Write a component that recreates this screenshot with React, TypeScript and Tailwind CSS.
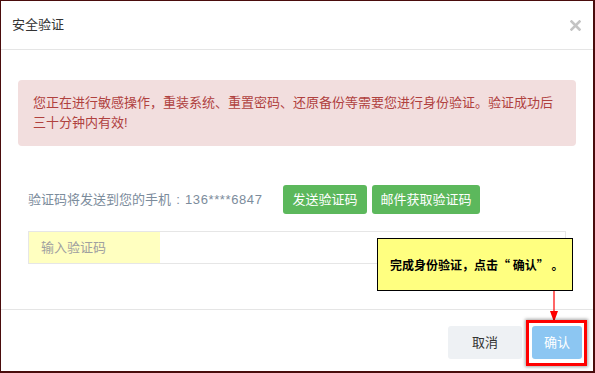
import React from "react";

const font = { fontFamily: '"Liberation Sans", "Noto Sans CJK SC", sans-serif' };
const cjk = { fontFamily: '"Noto Sans CJK SC", "Liberation Sans", sans-serif' };

function CloseIcon() {
  return (
    <svg width="11" height="11" viewBox="0 0 11 11" className="text-[#c4c4c4]">
      <path d="M1.5 1.5 L9.5 9.5 M9.5 1.5 L1.5 9.5" stroke="currentColor" strokeWidth="2.6" strokeLinecap="square" />
    </svg>
  );
}

export default function App() {
  return (
    <div
      style={font}
      className="relative flex h-[373px] w-[595px] flex-col overflow-hidden border border-r-2 border-b-2 border-[#4a0c0c] bg-white"
    >
      <div className="flex h-[49px] shrink-0 items-center justify-between border-b border-[#e5e5e5] pl-[11px] pr-[12px]">
        <span className="text-[13px] text-[#333]">安全验证</span>
        <CloseIcon />
      </div>

      <div className="flex-1 pl-[17px] pr-[17px] pt-[30px]">
        <div className="rounded-[4px] bg-[#f2dede] px-[15px] py-[13px] text-[13px] leading-[20px] text-[#b0413e]">
          您正在进行敏感操作，重装系统、重置密码、还原备份等需要您进行身份验证。验证成功后
          <br />
          三十分钟内有效!
        </div>

        <div className="ml-[10px] mt-[39px] flex items-center">
          <span className="flex w-[255px] items-center text-[13px] text-[#7c8c9c]">
            验证码将发送到您的手机
            <span className="inline-block w-[14px] text-center">:</span>
            <span className="tracking-[0.6px]">136****6847</span>
          </span>
          <button className="h-[29px] w-[84px] rounded-[3px] bg-[#5cb85c] text-[13px] text-white">
            发送验证码
          </button>
          <button className="ml-[5px] h-[29px] w-[108px] rounded-[3px] bg-[#5cb85c] text-[13px] text-white">
            邮件获取验证码
          </button>
        </div>

        <div className="ml-[10px] mt-[17px] flex h-[33px] w-[538px] border border-[#e6e6e6]">
          <div className="flex w-[131px] items-center bg-[#ffffc0] pl-[12px] text-[13px] text-[#a0a0a0]">
            输入验证码
          </div>
        </div>
      </div>

      <div className="flex h-[62px] shrink-0 items-start justify-end gap-[10px] border-t border-[#e5e5e5] pr-[11px] pt-[16px]">
        <button className="h-[33px] w-[74px] rounded-[3px] bg-[#eef1f4] text-[13px] text-[#333]">取消</button>
        <button className="h-[33px] w-[50px] rounded-[3px] bg-[#8cc6f2] text-[13px] text-white">确认</button>
      </div>

      <div
        style={cjk}
        className="absolute left-[376px] top-[237px] flex h-[53px] w-[196px] items-center border border-black bg-[#ffff80] pl-[12px] text-[12px] font-bold text-black"
      >
        完成身份验证，点击“ 确认” 。
      </div>

      <svg className="absolute left-[548px] top-[290px]" width="10" height="32" viewBox="0 0 10 32">
        <path d="M5 0 L5 30" stroke="#ff0000" strokeWidth="1.2" />
        <path d="M1 20 L5 31 L9 20 Z" fill="#ff0000" />
      </svg>

      <div className="absolute left-[525px] top-[319px] h-[46px] w-[61px] border-[3px] border-[#ff0000] shadow-[0_0_3px_1px_rgba(0,0,0,0.35)]" />
    </div>
  );
}
